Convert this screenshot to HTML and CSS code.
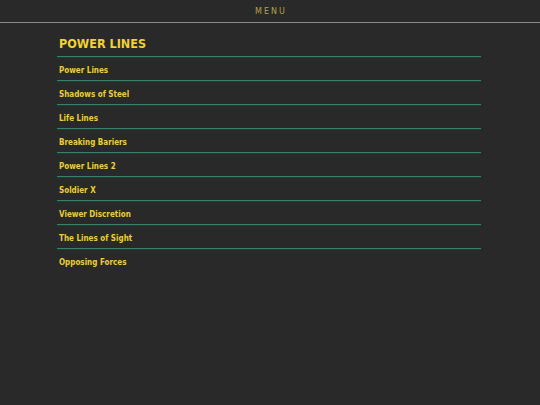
FILE: index.html
```html
<!DOCTYPE html>
<html>
<head>
<meta charset="utf-8">
<link rel="stylesheet" href="styles.css">
</head>
<body>
<header class="topbar"><span class="menu">MENU</span></header>
<main class="content">
  <h1 class="title">POWER LINES</h1>
  <ul class="list">
    <li class="item">Power Lines</li>
    <li class="item">Shadows of Steel</li>
    <li class="item">Life Lines</li>
    <li class="item">Breaking Bariers</li>
    <li class="item">Power Lines 2</li>
    <li class="item">Soldier X</li>
    <li class="item">Viewer Discretion</li>
    <li class="item">The Lines of Sight</li>
    <li class="item">Opposing Forces</li>
  </ul>
</main>
</body>
</html>
```
FILE: styles.css
```css
html, body {
  margin: 0;
  padding: 0;
  background: #292929;
  height: 100%;
}
body {
  font-family: "DejaVu Sans Condensed", "DejaVu Sans", Verdana, sans-serif;
}
.topbar {
  height: 22px;
  border-bottom: 1px solid #8c8c8c;
  display: flex;
  align-items: center;
  justify-content: center;
}
.menu {
  font-family: "DejaVu Sans", Verdana, sans-serif;
  font-size: 8px;
  letter-spacing: 2px;
  color: #b3a04e;
  padding-left: 2px;
}
.content {
  width: 424px;
  margin-left: 57px;
}
.title {
  margin: 0;
  font-size: 12.5px;
  font-weight: bold;
  color: #f0d232;
  line-height: 14px;
  padding: 14px 2px 5px;
  border-bottom: 1px solid #34806b;
  box-shadow: 0 1px 0 #1e3d33;
}
.list {
  list-style: none;
  margin: 0;
  padding: 0;
}
.item {
  font-size: 8px;
  font-weight: bold;
  color: #eccd3c;
  line-height: 10px;
  height: 10px;
  padding: 9px 2px 4px;
  border-bottom: 1px solid #34806b;
  box-shadow: 0 1px 0 #1e3d33;
}
.item:last-child {
  border-bottom: none;
  box-shadow: none;
}
```
